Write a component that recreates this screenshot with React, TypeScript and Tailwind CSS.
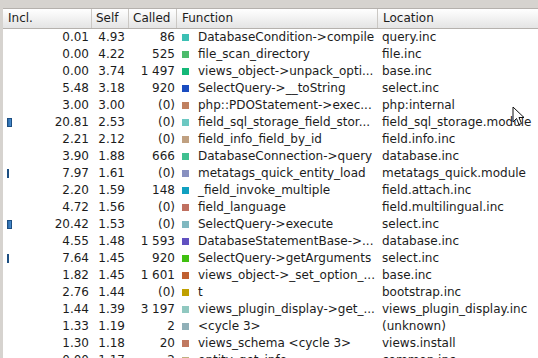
import React from "react";

type Row = {
  incl: string;
  self: string;
  called: string;
  color: string;
  fn: string;
  loc: string;
  bar?: number;
};

const rows: Row[] = [
  { incl: "0.01", self: "4.93", called: "86", color: "bg-[#3cc0b4]", fn: "DatabaseCondition->compile", loc: "query.inc" },
  { incl: "0.00", self: "4.22", called: "525", color: "bg-[#4cbb6c]", fn: "file_scan_directory", loc: "file.inc" },
  { incl: "0.00", self: "3.74", called: "1\u00a0497", color: "bg-[#14b878]", fn: "views_object->unpack_opti...", loc: "base.inc" },
  { incl: "5.48", self: "3.18", called: "920", color: "bg-[#1a4cc0]", fn: "SelectQuery->__toString", loc: "select.inc" },
  { incl: "3.00", self: "3.00", called: "(0)", color: "bg-[#c08060]", fn: "php::PDOStatement->exec...", loc: "php:internal" },
  { incl: "20.81", self: "2.53", called: "(0)", color: "bg-[#6cc8c2]", fn: "field_sql_storage_field_stor...", loc: "field_sql_storage.module", bar: 5 },
  { incl: "2.21", self: "2.12", called: "(0)", color: "bg-[#c0a080]", fn: "field_info_field_by_id", loc: "field.info.inc" },
  { incl: "3.90", self: "1.88", called: "666", color: "bg-[#40c090]", fn: "DatabaseConnection->query", loc: "database.inc" },
  { incl: "7.97", self: "1.61", called: "(0)", color: "bg-[#8890c0]", fn: "metatags_quick_entity_load", loc: "metatags_quick.module", bar: 1 },
  { incl: "2.20", self: "1.59", called: "148", color: "bg-[#10a0c0]", fn: "_field_invoke_multiple", loc: "field.attach.inc" },
  { incl: "4.72", self: "1.56", called: "(0)", color: "bg-[#c07060]", fn: "field_language", loc: "field.multilingual.inc" },
  { incl: "20.42", self: "1.53", called: "(0)", color: "bg-[#80b8c0]", fn: "SelectQuery->execute", loc: "select.inc", bar: 5 },
  { incl: "4.55", self: "1.48", called: "1\u00a0593", color: "bg-[#6050c0]", fn: "DatabaseStatementBase->...", loc: "database.inc" },
  { incl: "7.64", self: "1.45", called: "920", color: "bg-[#40c010]", fn: "SelectQuery->getArguments", loc: "select.inc", bar: 1 },
  { incl: "1.82", self: "1.45", called: "1\u00a0601", color: "bg-[#c06030]", fn: "views_object->_set_option_...", loc: "base.inc" },
  { incl: "2.76", self: "1.44", called: "(0)", color: "bg-[#c0a000]", fn: "t", loc: "bootstrap.inc" },
  { incl: "1.44", self: "1.39", called: "3\u00a0197", color: "bg-[#90c8c0]", fn: "views_plugin_display->get_...", loc: "views_plugin_display.inc" },
  { incl: "1.33", self: "1.19", called: "2", color: "bg-[#90b0b8]", fn: "<cycle 3>", loc: "(unknown)" },
  { incl: "1.30", self: "1.18", called: "20", color: "bg-[#c07860]", fn: "views_schema <cycle 3>", loc: "views.install" },
  { incl: "0.00", self: "1.17", called: "2", color: "bg-[#c0b080]", fn: "entity_get_info", loc: "common.inc" },
];

const grid = "grid grid-cols-[89px_37px_48px_201px_1fr]";

function Cursor() {
  return (
    <svg className="absolute left-[512px] top-[106px]" width="14" height="20" viewBox="0 0 14 20">
      <path
        d="M1 1 L1 16 L4.5 12.5 L7 18.5 L9.5 17.5 L7 11.5 L12 11.5 Z"
        fill="white"
        stroke="#111"
        strokeWidth="1"
        strokeLinejoin="round"
      />
    </svg>
  );
}

export default function App() {
  return (
    <div
      className="relative w-[538px] h-[358px] overflow-hidden bg-[#d6d3cf] pt-[8px] pl-[3px] text-[12px] text-[#1c1c1c]"
      style={{ fontFamily: '"DejaVu Sans", sans-serif' }}
    >
      <div className="bg-white h-full">
        <div className={`${grid} h-[21px] border-t border-b border-[#b5b1ad] bg-linear-to-b from-white to-[#e4e4e4] leading-[19px]`}>
          <div className="pl-[5px] border-r border-[#cbc8c4]">Incl.</div>
          <div className="pl-[4px] border-r border-[#cbc8c4]">Self</div>
          <div className="pl-[4px] border-r border-[#cbc8c4]">Called</div>
          <div className="pl-[5px] border-r border-[#cbc8c4]">Function</div>
          <div className="pl-[5px]">Location</div>
        </div>
        {rows.map((r, i) => (
          <div key={i} className={`${grid} h-[17px] leading-[17px] whitespace-nowrap`}>
            <div className="flex items-center justify-between pl-[4px] pr-[3px]">
              <div className="w-[6px] h-[9px] flex">
                {r.bar ? (
                  <div
                    className="h-[9px] bg-linear-to-r from-[#2a69a8] to-[#4a8ed0] border border-[#1d4f82]"
                    style={{ width: r.bar + "px" }}
                  />
                ) : null}
              </div>
              <span>{r.incl}</span>
            </div>
            <div className="text-right pr-[4px]">{r.self}</div>
            <div className="text-right pr-[2px]">{r.called}</div>
            <div className="flex items-center pl-[5px] overflow-hidden">
              <span className={`w-[7px] h-[7px] ${r.color} mr-[9px] shrink-0`} />
              <span>{r.fn}</span>
            </div>
            <div className="pl-[4px] overflow-hidden">{r.loc}</div>
          </div>
        ))}
      </div>
      <Cursor />
    </div>
  );
}
